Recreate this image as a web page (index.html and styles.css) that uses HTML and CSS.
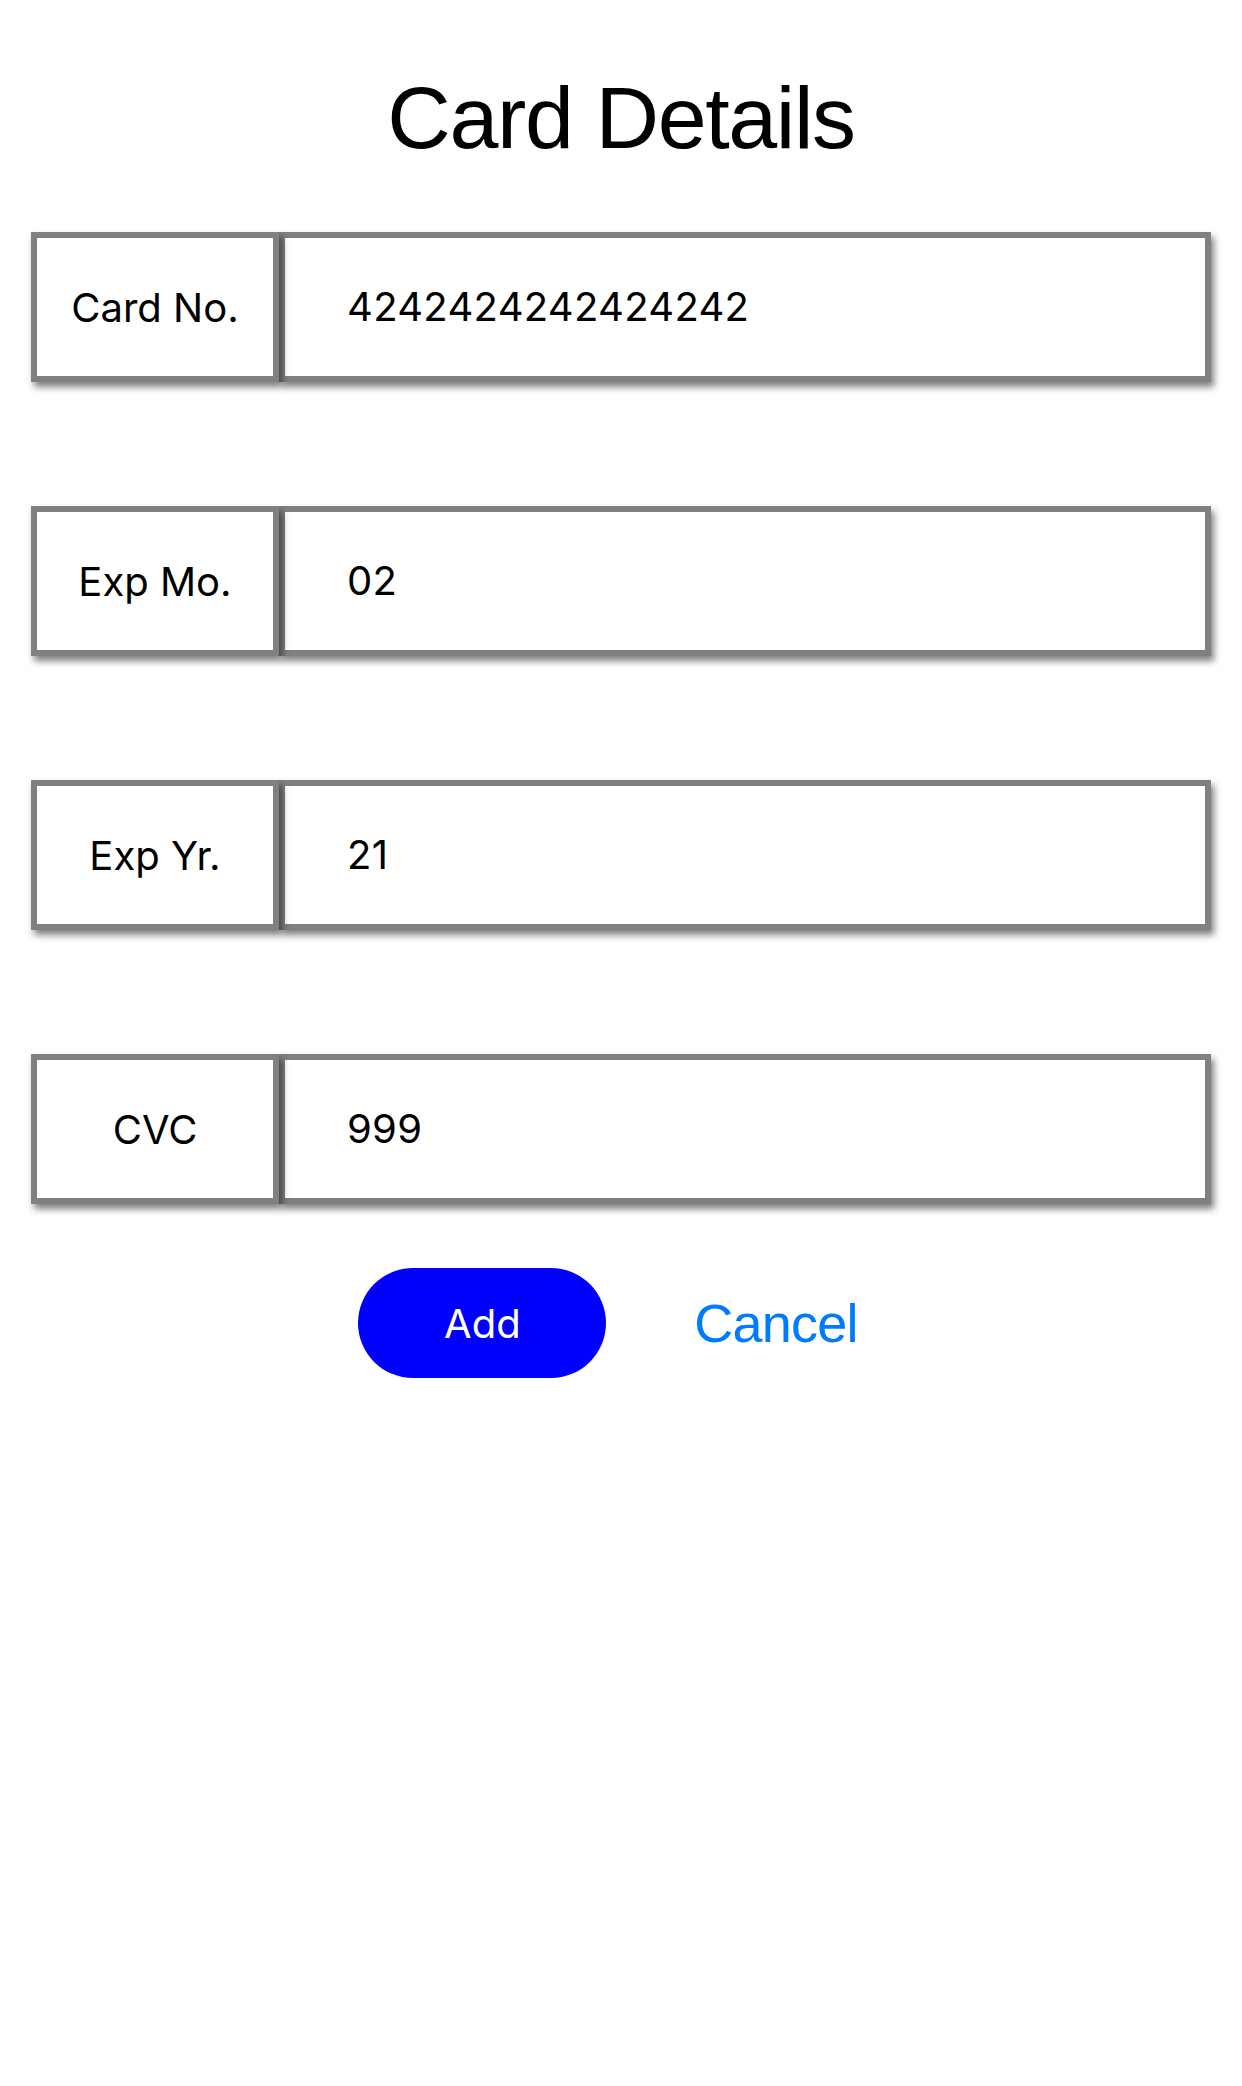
FILE: index.html
```html
<!DOCTYPE html>
<html lang="en">
<head>
<meta charset="utf-8">
<title>Card Details</title>
<link rel="stylesheet" href="styles.css">
</head>
<body>
<div class="page">
  <h1 class="title">Card Details</h1>
  <div class="form">
    <div class="row">
      <div class="label">Card No.</div>
      <div class="value digits">4242424242424242</div>
    </div>
    <div class="row">
      <div class="label">Exp Mo.</div>
      <div class="value digits">02</div>
    </div>
    <div class="row">
      <div class="label">Exp Yr.</div>
      <div class="value digits">21</div>
    </div>
    <div class="row">
      <div class="label">CVC</div>
      <div class="value digits">999</div>
    </div>
  </div>
  <div class="actions">
    <button class="btn-add" type="button">Add</button>
    <button class="btn-cancel" type="button">Cancel</button>
  </div>
</div>
</body>
</html>
```

FILE: styles.css
```css
html, body {
  margin: 0;
  padding: 0;
  background: #ffffff;
}

.page {
  width: 1242px;
  min-height: 2086px;
  font-family: Inter, "Liberation Sans", Arial, sans-serif;
  color: #000000;
}

.title {
  margin: 0;
  padding-top: 68px;
  height: 100px;
  line-height: 100px;
  font-family: "Liberation Sans", Arial, sans-serif;
  font-weight: 400;
  font-size: 88px;
  letter-spacing: -1.4px;
  text-align: center;
}

.form {
  margin-top: 64px;
  padding: 0 31px;
  display: flex;
  flex-direction: column;
  gap: 124px;
}

.row {
  display: flex;
  height: 150px;
}

.label,
.value {
  box-sizing: border-box;
  height: 150px;
  border: 6px solid #808080;
  background: #ffffff;
  box-shadow: 3px 5px 7px rgba(0, 0, 0, 0.5);
  display: flex;
  align-items: center;
  font-size: 40px;
}

.label {
  width: 248px;
  flex: 0 0 248px;
  justify-content: center;
  position: relative;
  z-index: 1;
}

.value {
  flex: 1 1 auto;
  padding-left: 62px;
  padding-bottom: 2px;
  letter-spacing: 0.3px;
}

.actions {
  margin-top: 64px;
  display: flex;
  justify-content: center;
  align-items: center;
  gap: 64px;
}

.btn-add {
  width: 248px;
  height: 110px;
  border: none;
  border-radius: 55px;
  background: #0000ff;
  color: #ffffff;
  font-family: Inter, "Liberation Sans", Arial, sans-serif;
  font-size: 40px;
  padding: 0;
}

.btn-cancel {
  border: none;
  background: transparent;
  color: #007aff;
  font-family: "Liberation Sans", Arial, sans-serif;
  font-size: 54px;
  letter-spacing: -0.8px;
  padding: 10px 26px 10px 24px;
}
```
